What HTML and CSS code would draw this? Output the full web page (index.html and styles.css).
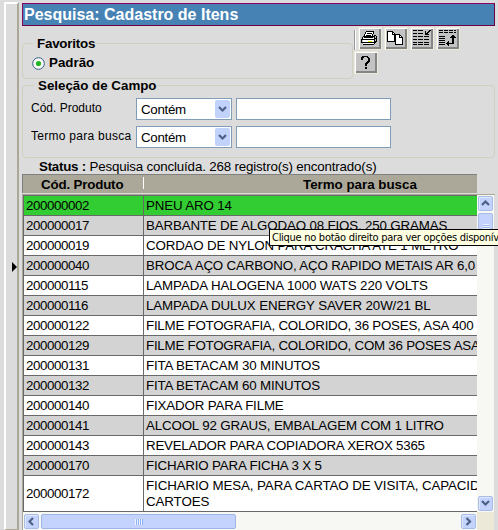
FILE: index.html
```html
<!DOCTYPE html>
<html lang="pt-BR">
<head>
<meta charset="utf-8">
<title>Pesquisa: Cadastro de Itens</title>
<link rel="stylesheet" href="styles.css">
</head>
<body>
<div class="app">
  <div class="splitter"><svg width="5" height="10"><path d="M0 0v10l5-5z"/></svg></div>
  <main class="panel">
    <h1 class="title"><span>Pesquisa: Cadastro de Itens</span></h1>
    <div class="top">
      <section class="group favs">
        <h2>Favoritos</h2>
        <label class="radio"><svg width="13" height="13"><circle cx="6.5" cy="6.5" r="5.8" fill="#fbfbf8" stroke="#325b82"/><circle cx="6.5" cy="6.5" r="2.6" fill="#22b422"/></svg><b>Padrão</b></label>
      </section>
      <div class="tools">
        <div class="toolrow">
          <i class="grip"></i>
          <button class="tool"><svg width="22" height="21" shape-rendering="crispEdges"><path fill="#fff" d="M7 4h8l-2 5H5zM4 10h12v6H4z"/><path d="M7 3h8v1H7zM6 4h1v2H6zM14 4h1v2h-1zM8 5h5v1H8zM5 6h1v2H5zM13 6h1v2h-1zM7 7h5v1H7zM4 8h12v1H4zM3 9h1v2H3zM15 7h2v1h-2zM17 8h1v6h-1zM3 11h12v1H3zM15 9h1v2h-1zM2 11h1v4H2zM3 14h12v1H3zM15 11h1v5h-1zM16 13h1v2h-1zM4 16h11v1H4zM16 10h1v1h-1zM5 9h9v1H5z"/><path fill="#e8e800" d="M9 13h4v1H9z"/></svg></button>
          <button class="tool"><svg width="22" height="21" shape-rendering="crispEdges"><path fill="#fff" stroke="#000" d="M2.5 3.5h5l2 2v8h-7zM10.500 6.500h4l3 3v7h-7z"/><path d="M7 3h1v3h2v1H7zM14 6h1v3h3v1h-4z"/></svg></button>
          <button class="tool"><svg width="22" height="21" shape-rendering="crispEdges"><path stroke="#000" d="M2 2.500h4M7 2.500h5M2 5.500h4M7 5.500h5M2 8.500h4M7 8.500h5M13 8.500h5M2 11.500h4M7 11.500h5M13 11.500h5M2 14.500h4M7 14.500h5M13 14.500h5M2 16.500h4M7 16.500h5M13 16.500h5"/><path d="M14 3h1v3h3v1h-4zM15 5h1v-1h1v-1h1v-1h2v1h-1v1h-1v1h-1v1h-2z"/></svg></button>
          <button class="tool"><svg width="22" height="21" shape-rendering="crispEdges"><path stroke="#000" stroke-dasharray="4 1" d="M2 2.500h17M2 4.500h17"/><path stroke="#000" d="M2 8.500h6M2 10.500h6M2 12.500h6M2 14.500h6M2 16.500h6"/><path d="M15 7h2v9h-5v-1h3zM13 9h1v-1h1v-1h2v1h1v1h1v1h-6zM9 15h1v-1h1v-1h1v5h-1v-1h-1v-1H9z"/></svg></button>
        </div>
        <button class="tool"><svg width="22" height="21" shape-rendering="crispEdges"><path d="M7 4h6v1h1v1h1v4h-1v1h-1v1h-1v2h-2v-3h1v-1h1v-1h1V6h-1V5H9v1H8v2H6V5h1zM10 15h2v2h-2z"/></svg></button>
      </div>
    </div>
    <section class="group fields">
      <h2>Seleção de Campo</h2>
      <div class="field"><label>Cód. Produto</label><div class="select"><span>Contém</span><i><svg width="9" height="7"><path d="M1 1l3.500 3.500L8 1" /></svg></i></div><input class="input"></div>
      <div class="field"><label class="wide">Termo para busca</label><div class="select"><span>Contém</span><i><svg width="9" height="7"><path d="M1 1l3.500 3.500L8 1" /></svg></i></div><input class="input"></div>
    </section>
    <p class="status"><b>Status :</b> <span>Pesquisa concluída. 268 registro(s) encontrado(s)</span></p>
    <div class="thead"><b>Cód. Produto</b><b class="second">Termo para busca</b></div>
    <div class="frame">
      <div class="view">
        <div class="row sel"><span>200000002</span><span>PNEU ARO 14</span></div>
        <div class="row"><span>200000017</span><span>BARBANTE DE ALGODAO 08 FIOS, 250 GRAMAS</span></div>
        <div class="row"><span>200000019</span><span>CORDAO DE NYLON PARA CRACHA ATE 1 METRO</span></div>
        <div class="row"><span>200000040</span><span>BROCA AÇO CARBONO, AÇO RAPIDO METAIS AR 6,0</span></div>
        <div class="row loose"><span>200000115</span><span>LAMPADA HALOGENA 1000 WATS 220 VOLTS</span></div>
        <div class="row loose"><span>200000116</span><span>LAMPADA DULUX ENERGY SAVER 20W/21 BL</span></div>
        <div class="row tight"><span>200000122</span><span>FILME FOTOGRAFIA, COLORIDO, 36 POSES, ASA 400</span></div>
        <div class="row tight"><span>200000129</span><span>FILME FOTOGRAFIA, COLORIDO, COM 36 POSES ASA</span></div>
        <div class="row"><span>200000131</span><span>FITA BETACAM 30 MINUTOS</span></div>
        <div class="row"><span>200000132</span><span>FITA BETACAM 60 MINUTOS</span></div>
        <div class="row"><span>200000140</span><span>FIXADOR PARA FILME</span></div>
        <div class="row"><span>200000141</span><span>ALCOOL 92 GRAUS, EMBALAGEM COM 1 LITRO</span></div>
        <div class="row tight"><span>200000143</span><span>REVELADOR PARA COPIADORA XEROX 5365</span></div>
        <div class="row"><span>200000170</span><span>FICHARIO PARA FICHA 3 X 5</span></div>
        <div class="row tall"><span>200000172</span><span>FICHARIO MESA, PARA CARTAO DE VISITA, CAPACID<br>CARTOES</span></div>
      </div>
      <div class="vbar"><i class="sb"><svg width="9" height="7"><path d="M1 5l3.500-3.500L8 5"/></svg></i><i class="vthumb"></i><i class="sb end"><svg width="9" height="7"><path d="M1 1l3.500 3.500L8 1"/></svg></i></div>
      <div class="hbar"><i class="sb"><svg width="7" height="9"><path d="M5 1L1.500 4.500 5 8"/></svg></i><i class="hthumb"><u></u></i><i class="sb end"><svg width="7" height="9"><path d="M1.500 1L5 4.500 1.500 8"/></svg></i></div>
      <div class="corner"></div>
    </div>
  </main>
  <div class="tip"><span>Clique no botão direito para ver opções disponíveis</span></div>
</div>
</body>
</html>
```
FILE: styles.css
```css
* { box-sizing: border-box; }
body { margin: 0; background: #dcdcdc; overflow: hidden; font: 13.33px/16px "Liberation Sans", Arial, sans-serif; color: #000; }
h1, h2, p { margin: 0; }
svg { display: block; }
.app { display: flex; width: 498px; height: 530px; padding: 2px 0 0 4px; position: relative; overflow: hidden; }
.splitter { width: 15px; border: 2px solid #fff; border-right-color: #aca899; border-bottom: 1px solid #aca899; display: flex; align-items: center; justify-content: flex-end; }
.panel { margin-left: 3px; width: 473px; padding-top: 1px; }
.title { height: 23px; border: 1px solid #800040; border-color: #900060 #700040 #700040 #900060; background: #4682b4; color: #fff; font-size: 16px; line-height: 21px; padding-left: 1px; white-space: nowrap; }
.top { display: flex; height: 59px; }
.group { border: 1px solid #d0d0bf; border-radius: 4px; }
.group h2 { font-size: 13.33px; line-height: 16px; height: 16px; margin: -8px 0 0 10px; padding: 0 0 0 4px; background: #dcdcdc; width: max-content; white-space: nowrap; letter-spacing: -.2px; }
.favs { width: 331px; height: 36px; margin-top: 17px; }
.radio { display: flex; align-items: center; gap: 4px; margin: 3px 0 0 9px; }
.tools { margin-left: 1px; }
.toolrow { display: flex; gap: 2px; height: 25px; padding-top: 1px; }
.grip { width: 2px; height: 20px; margin-top: 3px; background: #999; border-right: 1px solid #fff; }
.tool { width: 24px; height: 23px; padding: 0; border: 1px solid #ece9d8; background: #c3c3c3; box-shadow: inset 1px 1px #fff, inset -2px -2px #858585; display: block; }
.fields { height: 73px; }
.fields h2 { margin-left: 11px; letter-spacing: 0; }
.field { display: flex; height: 28px; align-items: center; padding-left: 8px; }
.fields h2 + .field { margin-top: 1px; }
.field label { width: 105px; height: 18px; font-size: 12px; white-space: nowrap; }
.field label.wide { letter-spacing: .27px; }
.select { width: 96px; height: 22px; border: 1px solid #7f9db9; background: #fff; display: flex; justify-content: space-between; padding: 1px 1px 1px 4px; line-height: 20px; letter-spacing: -.3px; }
.select i { width: 15px; height: 18px; border-radius: 2px; background: #c1d2fb; display: flex; align-items: center; justify-content: center; }
i svg path { fill: none; stroke: #4d6185; stroke-width: 2.2; }
.input { width: 155px; height: 22px; border: 1px solid #7f9db9; background: #fff; margin-left: 4px; padding: 0; }
.status { height: 16px; padding-left: 17px; white-space: nowrap; line-height: 17px; letter-spacing: -.16px; }
.status b { letter-spacing: -.25px; }
.thead { width: 455px; height: 19px; background: #aca899; border: 1px solid #808080; border-width: 1px 0 0 1px; display: flex; line-height: 19px; padding-left: 18px; white-space: nowrap; }
.thead .second { position: relative; margin-left: 20px; padding-left: 159px; }
.thead .second::before { content: ""; width: 1px; height: 12px; background: #fff; position: absolute; left: -1px; top: 2px; }
.thead b:first-child { width: 83px; letter-spacing: -.17px; }
.frame { margin-top: 1px; width: 473px; height: 336px; border: solid #aca899; border-width: 1px 0 0 1px; display: grid; grid-template: 317px 18px / 454px 17px; }
.view { overflow: hidden; border: 1px solid #696969; border-right: 0; background: #fff; }
.row { display: grid; grid-template-columns: 120px 1fr; height: 20px; border-bottom: 1px solid #696969; background: #fff; white-space: nowrap; line-height: 20px; }
.row:nth-child(even) { background: #d3d3d3; }
.row.sel { background: #32cd32; }
.row span { padding-left: 2px; overflow: hidden; letter-spacing: -.16px; }
.row.loose span { letter-spacing: -.1px; }
.row.tight span { letter-spacing: -.24px; }
.row span:first-child { border-right: 1px solid #696969; letter-spacing: -.41px; }
.row.tall { height: 36px; line-height: 35px; }
.row.tall span:last-child { line-height: 16px; padding-top: 2px; letter-spacing: -.1px; }
.vbar { background: #f7f7f3; display: flex; flex-direction: column; padding: 1px; }
.hbar { background: #f7f7f3; display: flex; padding: 2px 1px 1px; }
.corner { background: #ece9d8; }
.sb { width: 15px; height: 15px; flex: none; background: #c3d3fd; border: 1px solid #a8bce8; border-radius: 2px; box-shadow: inset 1px 1px #e0e8ff; display: flex; align-items: center; justify-content: center; }
.sb.end { margin-left: auto; }
.vbar .sb.end { margin: auto 0 0; }
.vthumb { width: 15px; height: 27px; margin-top: 2px; border: 1px solid #a8bce8; border-radius: 2px; background: repeating-linear-gradient(#eef4fe 0 1px, #9cb4ee 1px 2px) 4px 10px / 6px 8px no-repeat #c3d3fd; }
.hthumb { width: 195px; height: 15px; margin-left: 2px; background: #c3d3fd; border: 1px solid #a0b5e5; border-radius: 2px; display: flex; align-items: center; justify-content: center; }
.hthumb u { width: 8px; height: 6px; background: repeating-linear-gradient(90deg, #eef4fe 0 1px, #8cb0f8 1px 2px); }
.tip { position: absolute; left: 269px; top: 229px; width: 260px; height: 17px; border: 1px solid #000; background: #ffffe1; font: 11px/15px "DejaVu Sans Condensed", "DejaVu Sans", sans-serif; font-stretch: condensed; letter-spacing: -.28px; padding-left: 2px; white-space: nowrap; }
```
